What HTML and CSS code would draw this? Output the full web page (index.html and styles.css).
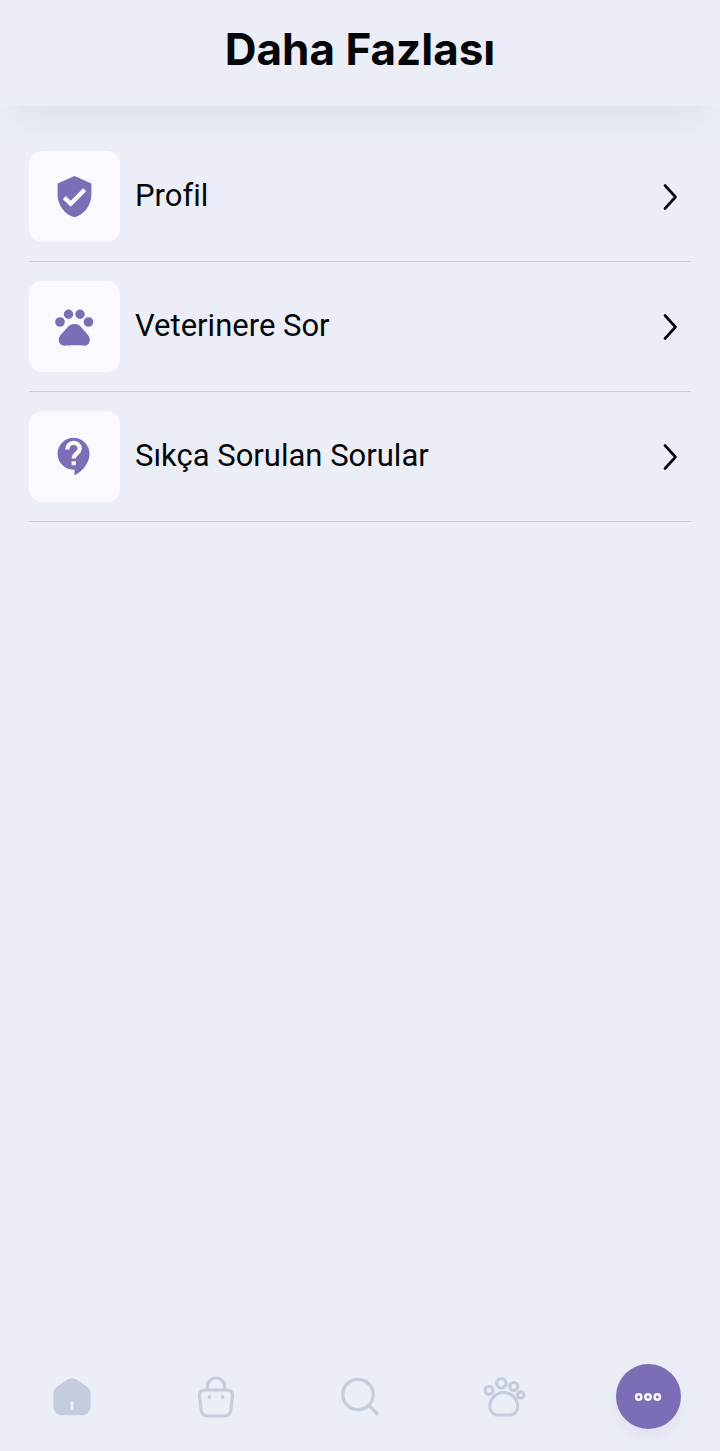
FILE: index.html
```html
<!DOCTYPE html>
<html lang="tr">
<head>
<meta charset="utf-8">
<meta name="viewport" content="width=device-width, initial-scale=1">
<title>Daha Fazlası</title>
<link rel="stylesheet" href="styles.css">
</head>
<body>
<header class="header"><h1 class="title">Daha Fazlası</h1></header>
<main class="content">
  <ul class="menu">
    <li class="menu-item">
      <a class="menu-link" href="#profil">
        <span class="tile"><svg class="tile-icon" viewBox="0 0 24 24" aria-hidden="true"><path d="M12 1L3 5v6c0 5.550 3.840 10.740 9 12 5.160-1.260 9-6.450 9-12V5l-9-4z"/><path class="check" d="M6.600 12.600L10 15.900L17.400 8.400"/></svg></span>
        <span class="label">Profil</span>
        <svg class="chevron" viewBox="0 0 16 28" aria-hidden="true"><path d="M3 2.500l10.500 11.500L3 25.500"/></svg>
      </a>
    </li>
    <li class="menu-item">
      <a class="menu-link" href="#veteriner">
        <span class="tile"><svg class="tile-icon" viewBox="0 0 45 45" aria-hidden="true"><circle cx="8" cy="18" r="4.800"/><circle cx="16.500" cy="10.300" r="4.700"/><circle cx="28" cy="10.300" r="4.700"/><circle cx="36.500" cy="18" r="4.800"/><path d="M17 21.800C20 19.300 25 19.300 28 21.800L36 31C39.500 35.500 37.500 41.500 33 41.700C29 41.700 27 41.300 22.300 41.300C17.500 41.300 15.500 41.700 12 41.700C7 41.500 5 35.500 8.500 31Z"/></svg></span>
        <span class="label">Veterinere Sor</span>
        <svg class="chevron" viewBox="0 0 16 28" aria-hidden="true"><path d="M3 2.500l10.500 11.500L3 25.500"/></svg>
      </a>
    </li>
    <li class="menu-item">
      <a class="menu-link" href="#sorular">
        <span class="tile"><svg class="tile-icon" viewBox="0 0 24 24" aria-hidden="true"><path d="M11.500 2C6.810 2 3 5.810 3 10.500S6.810 19 11.500 19h.5v3c4.860-2.340 8-7 8-11.500C20 5.810 16.190 2 11.500 2z"/><path class="question" d="M8.200 8.200c0-2 1.400-3.500 3.300-3.500s3.300 1.400 3.300 3.200c0 2.200-3.200 2.500-3.200 5.200M11.600 14.500v2.200"/></svg></span>
        <span class="label">Sıkça Sorulan Sorular</span>
        <svg class="chevron" viewBox="0 0 16 28" aria-hidden="true"><path d="M3 2.500l10.500 11.500L3 25.500"/></svg>
      </a>
    </li>
  </ul>
</main>
<nav class="tabs">
  <a class="tab" href="#home" aria-label="Ana sayfa"><svg class="tab-icon" viewBox="0 0 48 48" aria-hidden="true"><path class="solid" d="M18.500 7C22 4.700 26 4.700 29.500 7L38 13C41.500 15.500 42.700 17.500 42.700 21V32C42.700 39 39.500 42.300 33 42.300H15C8.500 42.300 5.300 39 5.300 32V21C5.300 17.500 6.500 15.500 10 13Z"/><path class="door" d="M24 29.500v6"/></svg></a>
  <a class="tab" href="#shop" aria-label="Mağaza"><svg class="tab-icon" viewBox="0 0 48 48" aria-hidden="true"><path d="M15.500 17v-3.500a8.500 8.500 0 0 1 17 0V17M13 17h22c4 0 6 2.500 5.500 6.500l-1.700 13.500c-.5 4-2.800 6-6.800 6H16c-4 0-6.300-2-6.800-6L7.500 23.500C7 19.500 9 17 13 17z"/><circle class="solid" cx="17.500" cy="24" r="1.900"/><circle class="solid" cx="30.500" cy="24" r="1.900"/></svg></a>
  <a class="tab" href="#search" aria-label="Ara"><svg class="tab-icon" viewBox="0 0 48 48" aria-hidden="true"><circle cx="22" cy="21.500" r="15.200"/><path class="handle" d="M33 32.500l8 8"/></svg></a>
  <a class="tab" href="#pets" aria-label="Evcil hayvanlar"><svg class="tab-icon" viewBox="0 0 48 48" aria-hidden="true"><circle cx="9" cy="17.300" r="4"/><circle cx="21.300" cy="10.300" r="4.700"/><circle cx="33.700" cy="13.500" r="4"/><circle cx="40.700" cy="22" r="3.200"/><path d="M17.500 42C12.500 42 9.800 37.500 9.800 33.500C9.800 26 16 19.500 23.700 19.500C31.500 19.500 37.700 26 37.700 33.500C37.700 37.500 35 42 30 42Z"/></svg></a>
  <a class="tab" href="#more" aria-label="Daha fazlası" aria-current="page"><span class="fab"><svg class="tab-icon" viewBox="0 0 48 48" aria-hidden="true"><circle cx="14.700" cy="24" r="2.700"/><circle cx="24" cy="24" r="2.700"/><circle cx="33.300" cy="24" r="2.700"/></svg></span></a>
</nav>
</body>
</html>
```
FILE: styles.css
```css
* {
  box-sizing: border-box;
}

body {
  margin: 0;
  min-height: 100vh;
  display: flex;
  flex-direction: column;
  background: #ebeef6;
  color: #050608;
  font-family: Roboto, sans-serif;
}

.header {
  padding: 19px 28px 27px;
  background: #ebeef6;
  box-shadow: 0 28px 28px -14px #dfe2ed;
  text-align: center;
}

.title {
  margin: 0;
  font-family: Inter, sans-serif;
  font-size: 44px;
  font-weight: 700;
  line-height: 60px;
}

.content {
  flex: 1;
  padding: 26px 29px;
}

.menu {
  margin: 0;
  padding: 0;
  list-style: none;
}

.menu-item {
  border-bottom: 1px solid #c6cbde;
}

.menu-link {
  display: flex;
  align-items: center;
  gap: 15px;
  padding: 19px 13px 19px 0;
  color: inherit;
  text-decoration: none;
}

.tile {
  display: flex;
  align-items: center;
  justify-content: center;
  width: 91px;
  height: 91px;
  border-radius: 13px;
  background: #f9f9ff;
}

.tile-icon {
  width: 45px;
  height: 45px;
  fill: #7b6eb6;
}

.check,
.question {
  fill: none;
  stroke: #f9f9ff;
  stroke-width: 2.3;
}

.label {
  flex: 1;
  padding-bottom: 2px;
  font-size: 31px;
  line-height: 40px;
}

.chevron {
  width: 16px;
  height: 28px;
  fill: none;
  stroke: #050608;
  stroke-width: 2.6;
  stroke-linecap: round;
  stroke-linejoin: round;
}

.tabs {
  display: grid;
  grid-template-columns: repeat(5, 1fr);
  height: 110px;
  border-top: 1px solid #e8ebf4;
  background: #ebeef6;
}

.tab {
  display: flex;
  align-items: center;
  justify-content: center;
}

.tab-icon {
  width: 48px;
  height: 48px;
  fill: none;
  stroke: #c5ccdc;
  stroke-width: 3.2;
}

.solid {
  fill: #c5ccdd;
  stroke: none;
}

.door {
  stroke: #ebeef6;
  stroke-linecap: round;
}

.handle {
  stroke-width: 3.6;
  stroke-linecap: round;
}

.fab {
  display: flex;
  align-items: center;
  justify-content: center;
  width: 65px;
  height: 65px;
  border-radius: 50%;
  background: #7b6eb6;
  box-shadow: 0 8px 14px #dfe2ef;
}

.fab .tab-icon {
  stroke: #f9f9ff;
  stroke-width: 2.4;
}
```
